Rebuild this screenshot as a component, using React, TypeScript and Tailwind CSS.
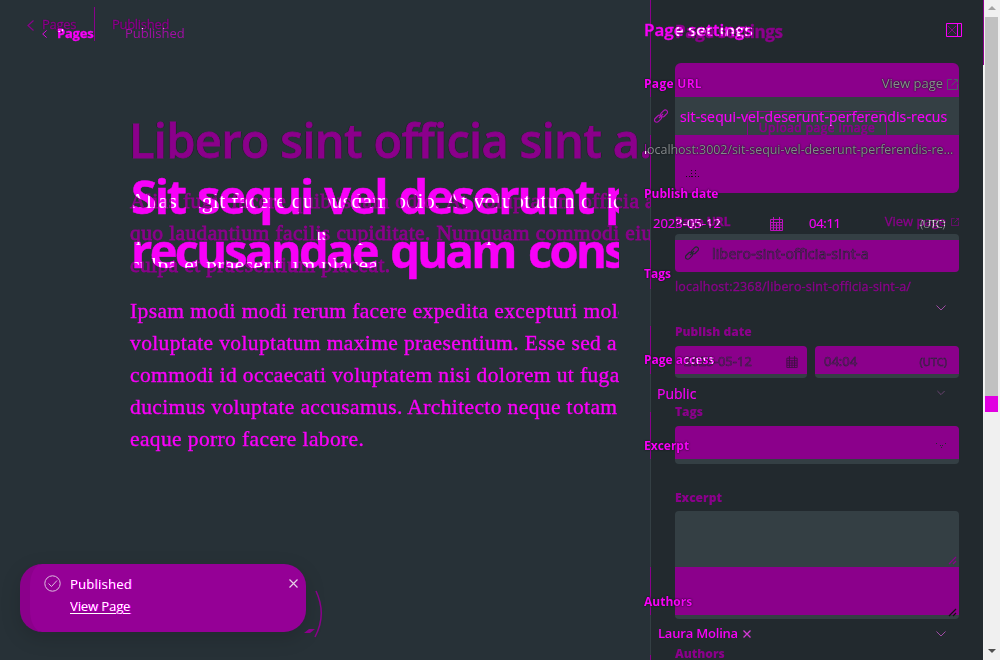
import type { ReactNode } from "react";

const sans = "font-['Open_Sans','Noto_Sans',sans-serif]";
const serif = "font-['Liberation_Serif','Times_New_Roman',serif]";

function Chevron({ className = "" }: { className?: string }) {
  return (
    <svg className={className} width="10" height="6" viewBox="0 0 10 6" fill="none" stroke="currentColor">
      <path d="M.5.5 5 5 9.5.5" />
    </svg>
  );
}

function Back({ className = "" }: { className?: string }) {
  return (
    <svg className={className} viewBox="0 0 7 11" fill="none" stroke="currentColor" strokeWidth="1.200">
      <path d="M6.5.5 1 5.5l5.5 5" />
    </svg>
  );
}

function External({ className = "" }: { className?: string }) {
  return (
    <svg className={className} viewBox="0 0 11 11" fill="none" stroke="currentColor">
      <path d="M5 .5H.5v10h10V5M4.5 6.500l6-6M7 .5h3.500v3" />
    </svg>
  );
}

function Link({ className = "" }: { className?: string }) {
  return (
    <svg className={className} width="14" height="14" viewBox="0 0 14 14" fill="none" stroke="currentColor" strokeWidth="1.200">
      <rect x="6" y="2.200" width="8" height="4.400" rx="2.200" transform="rotate(-45 10 4.400)" />
      <rect x="0" y="7.600" width="8" height="4.400" rx="2.200" transform="rotate(-45 4 9.800)" />
      <path d="m5 9 4-4" />
    </svg>
  );
}

function Calendar({ className = "" }: { className?: string }) {
  return (
    <svg className={className} width="13" height="14" viewBox="0 0 13 14" fill="none" stroke="currentColor">
      <path d="M.5 2.500h12v11H.5zM.5 5.500h12M.5 8.200h12M.5 10.800h12M3.500 0v13.500M6.500 5v8.500M9.500 0v13.500" />
    </svg>
  );
}

function Resizer({ className = "" }: { className?: string }) {
  return (
    <svg className={className} width="9" height="9" viewBox="0 0 9 9" fill="none" stroke="currentColor" strokeWidth="1.200">
      <path d="M1 8 8 1M5 8l3-3" />
    </svg>
  );
}

function Draft() {
  return (
    <div className="flex h-[660px] w-[983px] overflow-hidden text-[#8b008b]">
      <section className="flex w-[650px] shrink-0 flex-col overflow-hidden">
        <header className="flex h-[50px] items-center pl-[27px] text-[13px]">
          <Back className="h-[11px] w-[7px]" />
          <span className="ml-2 w-[52px] tracking-[-0.3px] [-webkit-text-stroke:0.3px_#8b008b] [text-shadow:0_0_1px_#111]">Pages</span>
          <span className="h-[34px] w-px -translate-y-px bg-[#8b008b]" />
          <span className="ml-[17px] tracking-[-0.3px] [-webkit-text-stroke:0.3px_#8b008b] [text-shadow:0_0_1px_#111]">Published</span>
        </header>
        <h1 className="mt-[63px] ml-[129px] h-[55px] text-[47px] leading-[54px] font-semibold tracking-[-0.7px] whitespace-nowrap [-webkit-text-stroke:0.8px_#8b008b] [text-shadow:-1px_0_0_#1d2226,1px_0_0_#1d2226]">
          Libero sint officia sint a.
        </h1>
        <div className={`mt-[17px] ml-[130px] text-[21.500px] leading-8 tracking-[0.380px] whitespace-nowrap [-webkit-text-stroke:0.8px_#8b008b] ${serif}`}>
          <p>Alias fugit facere quibusdam odio. At voluptatum officia at</p>
          <p>quo laudantium facilis cupiditate. Numquam commodi eius</p>
          <p>culpa et praesentium placeat.</p>
        </div>
      </section>
      <aside className="flex w-[309px] shrink-0 flex-col pl-[25px] [&>*]:shrink-0">
        <h2 className="flex h-[64px] items-center text-[17px] font-bold tracking-[-0.4px] [-webkit-text-stroke:0.4px_#8b008b]">Page settings</h2>
        <div className="-mt-px flex h-[130px] flex-col items-center overflow-hidden rounded-md bg-[linear-gradient(#8b008b_34px,#343f44_34px,#343f44_72px,#8b008b_72px)]">
          <span className="mt-[48px] flex h-[34px] w-[140px] shrink-0 items-center justify-center rounded border border-[#8b008b] pb-px text-[12px] tracking-[0.5px] [-webkit-text-stroke:0.7px_#8b008b]">
            Upload page image
          </span>
          <svg className="mt-[2px] mr-[248px] h-[34px] w-[14px] shrink-0 text-[#111]" viewBox="0 0 14 34" fill="none" stroke="currentColor" strokeDasharray="1 2">
            <path d="M5.500 23v9M9.500 23v9M0 29.500h14" />
          </svg>
        </div>
        <div className="mt-[18px] flex h-[22px] items-center text-[12px]">
          <span className="font-bold [-webkit-text-stroke:0.4px_#8b008b]">Page URL</span>
          <span className="ml-auto text-[13px] [-webkit-text-stroke:0.3px_#8b008b]">View page</span>
          <External className="ml-[5px] h-[8px] w-[8px]" />
        </div>
        <div className="mt-px flex h-[38px] items-center rounded bg-[linear-gradient(#343f44_6px,#8b008b_6px)] pl-[10px] text-[14px]">
          <Link className="text-[#222930]" />
          <span className="ml-[13px] tracking-[0.25px] [-webkit-text-stroke:0.6px_#222930]">libero-sint-officia-sint-a</span>
        </div>
        <div className="flex h-[30px] items-center pt-px text-[12.500px] tracking-[0.200px] [-webkit-text-stroke:0.3px_#8b008b]">localhost:2368/libero-sint-officia-sint-a/</div>
        <div className="mt-[20px] flex h-5 items-center text-[12px] font-extrabold">Publish date</div>
        <div className="mt-[4px] flex h-8 gap-2 text-[13px]">
          <div className="flex w-[132px] items-center justify-between rounded bg-[linear-gradient(#8b008b_28px,#343f44_28px)] px-[9px] [-webkit-text-stroke:0.5px_#222930]">
            <span>2023-05-12</span>
            <Calendar className="h-3 w-3 text-[#3a103f]" />
          </div>
          <div className="flex w-[144px] items-center justify-between rounded bg-[linear-gradient(#8b008b_28px,#343f44_28px)] pr-[12px] pl-[9px] [-webkit-text-stroke:0.5px_#222930]">
            <span>04:04</span>
            <span className="text-[11px]">(UTC)</span>
          </div>
        </div>
        <div className="mt-[24px] flex h-5 items-center text-[12px] font-extrabold">Tags</div>
        <div className="mt-[4px] flex h-[38px] items-center justify-end rounded bg-[linear-gradient(#8b008b_33px,#343f44_33px)] pr-[13px]">
          <svg width="10" height="5" viewBox="0 0 10 5" className="text-[#222930]" fill="currentColor">
            <path d="M0 0h1v1H0zM9 0h1v1H9zM4 2h1v1H4zM6 2h1v1H6zM5 4h1v1H5z" />
          </svg>
        </div>
        <div className="mt-[24px] flex h-5 items-center text-[12px] font-extrabold">Excerpt</div>
        <div className="mt-[3px] flex h-[108px] flex-col items-end justify-between rounded bg-[linear-gradient(#343f44_56px,#8b008b_56px,#8b008b_104px,#343f44_104px)] pt-[45px] pr-0.5 pb-0.5">
          <Resizer className="text-[#8b008b]" />
          <Resizer className="text-[#111]" />
        </div>
        <div className="mt-[25px] flex h-5 items-center text-[12px] font-extrabold">Authors</div>
      </aside>
    </div>
  );
}

function Label({ children, className }: { children: ReactNode; className: string }) {
  return (
    <div className={`flex h-5 shrink-0 items-center text-[12px] font-bold [text-shadow:0_0_2px_#16191c,0_0_1px_#16191c] ${className}`}>
      {children}
    </div>
  );
}

function Live() {
  return (
    <div className="flex h-[660px] w-[983px] overflow-hidden text-[#f800f8]">
      <section className="flex w-[619px] shrink-0 flex-col overflow-hidden">
        <header className="flex h-[66px] items-center pt-px pl-[42px] text-[13px]">
          <Back className="h-[8px] w-[5px]" />
          <span className="ml-[10px] w-[68px] font-bold tracking-[-0.200px] [-webkit-text-stroke:0.3px_#f800f8]">Pages</span>
          <span className="text-[#a30ea5]">Published</span>
        </header>
        <h1 className="mt-[103px] ml-[131px] text-[47px] leading-[54px] font-bold whitespace-nowrap [-webkit-text-stroke:0.5px_#f800f8]">
          <span className="block tracking-[-2.200px] [word-spacing:2px]">Sit sequi vel deserunt perferendis</span>
          <span className="block tracking-[-2.700px] [word-spacing:4px]">recusandae quam consequatur</span>
        </h1>
        <div className={`mt-[18px] ml-[130px] text-[21.500px] leading-8 tracking-[0.380px] whitespace-nowrap [-webkit-text-stroke:0.4px_#f800f8] ${serif}`}>
          <p>Ipsam modi modi rerum facere expedita excepturi molestiae</p>
          <p>voluptate voluptatum maxime praesentium. Esse sed a</p>
          <p>commodi id occaecati voluptatem nisi dolorem ut fuga</p>
          <p>ducimus voluptate accusamus. Architecto neque totam</p>
          <p>eaque porro facere labore.</p>
        </div>
      </section>
      <aside className="ml-[25px] flex w-[318px] shrink-0 flex-col">
        <div className="flex h-[60px] shrink-0 items-center justify-between">
          <h2 className="text-[17px] font-semibold [-webkit-text-stroke:0.4px_#f800f8]">Page settings</h2>
          <svg width="16" height="15" viewBox="0 0 16 15" fill="none" stroke="currentColor">
            <path d="M.5.5h15v13H.5zM11.500.5v13" />
            <path d="m2 3 8 8M10 3l-8 8" stroke="#8b008b" />
          </svg>
        </div>
        <Label className="mt-[14px] pr-1">
          <span className="tracking-[0.300px]">Page URL</span>
          <span className="ml-auto text-[13px] font-normal text-[#8b8f91]">View page</span>
          <External className="ml-[4px] h-[11px] w-[11px] text-[#4c5b62]" />
        </Label>
        <div className="mt-[3px] flex h-[38px] shrink-0 items-center pl-[10px] text-[14px] [-webkit-text-stroke:0.2px_#f800f8]">
          <Link className="text-[#b012b4]" />
          <span className="ml-3 tracking-[0.150px] whitespace-nowrap">sit-sequi-vel-deserunt-perferendis-recus</span>
        </div>
        <div className="flex h-[30px] shrink-0 items-center text-[12.500px] tracking-[-0.060px] whitespace-nowrap text-[#858a8d] [text-shadow:0_0_2px_#16191c,0_0_1px_#16191c]">
          <span className="text-[#a30ea5]">l</span>ocalhost:3002/sit-sequi-vel-deserunt-perferendis-re...
        </div>
        <Label className="mt-[19px]">Publish date</Label>
        <div className="mt-[3px] flex h-[34px] shrink-0 items-center pl-[9px] text-[13px] [-webkit-text-stroke:0.2px_#f800f8]">
          <span className="w-[117px]">2023-05-12</span>
          <Calendar className="text-[#bd10bd]" />
          <span className="ml-[26px] w-[111px] tracking-[-0.300px]">04:11</span>
          <span className="text-[11px] tracking-[-0.500px] text-[#858a8d] [-webkit-text-stroke:0px]">(UTC)</span>
        </div>
        <Label className="mt-[23px]">Tags</Label>
        <div className="mt-[5px] flex h-[37px] shrink-0 items-center justify-end pr-4">
          <Chevron className="text-[#a04aa5]" />
        </div>
        <Label className="mt-[24px]">Page access</Label>
        <div className="mt-[4px] flex h-[38px] shrink-0 items-center justify-between pr-[17px] pl-[13px] text-[14px] [-webkit-text-stroke:0.2px_#f800f8]">
          <span>Public</span>
          <Chevron className="w-2 text-[#7c4a82]" />
        </div>
        <Label className="mt-[24px]">Excerpt</Label>
        <div className="mt-[3px] h-[108px] shrink-0" />
        <Label className="mt-[25px]">Authors</Label>
        <div className="mt-[3px] flex h-[38px] shrink-0 items-center pr-4 pl-[14px] text-[13px] font-semibold">
          <span className="tracking-[-0.200px]">Laura Molina</span>
          <svg className="ml-[5px] text-[#d43ad6]" width="8" height="8" viewBox="0 0 8 8" fill="none" stroke="currentColor" strokeWidth="1.300">
            <path d="m.5.5 7 7M7.500.5l-7 7" />
          </svg>
          <Chevron className="ml-auto text-[#a04aa5]" />
        </div>
      </aside>
    </div>
  );
}

function Toast() {
  return (
    <div className="flex h-[68px] w-[286px] items-start rounded-[22px] border-l-[10px] border-[#8b008b] bg-[#950096] pt-[11px] pr-[8px] pl-[14px] text-white shadow-[0_6px_20px_rgba(0,0,0,0.150)]">
      <svg className="shrink-0 text-[#ddbfdf]" width="17" height="17" viewBox="0 0 17 17" fill="none" stroke="currentColor">
        <circle cx="8.500" cy="8.500" r="7.700" />
        <path d="m4.500 8.500 3 3 5.500-6" />
      </svg>
      <div className="ml-[9px] flex flex-col text-[13px] leading-[18px]">
        <span className="tracking-[0.250px] [text-shadow:1px_0_0_#ff00ff]">Published</span>
        <span className="mt-[4px] tracking-[-0.100px] underline decoration-1 underline-offset-2 [text-shadow:1px_0_0_#ff00ff]">View Page</span>
      </div>
      <svg className="mt-[4px] ml-auto text-[#e6cfe6]" width="9" height="9" viewBox="0 0 9 9" fill="none" stroke="currentColor" strokeWidth="1.200">
        <path d="m.5.5 8 8M8.500.5l-8 8" />
      </svg>
    </div>
  );
}

function Scrollbar() {
  return (
    <div className="flex h-[660px] w-[17px] flex-col items-center border-l border-[#f4f4f4] bg-[#f0f0f0] pr-px">
      <svg className="mt-[6px] mb-[7px] shrink-0" width="8" height="4" viewBox="0 0 8 4" fill="#a3a3a3">
        <path d="M0 4 4 0l4 4z" />
      </svg>
      <div className="h-[379px] w-[13px] bg-[#c1c1c1]" />
      <div className="h-[16px] w-[13px] bg-[#e100e1]" />
      <svg className="mt-auto mb-[7px] shrink-0" width="8" height="4" viewBox="0 0 8 4" fill="#505050">
        <path d="m0 0 4 4 4-4z" />
      </svg>
    </div>
  );
}

const cell = "[grid-area:1/1]";
const mask =
  "bg-black [&_*]:!border-transparent [&_*]:!bg-transparent [&_*]:!bg-none [&_*]:!text-white [&_*]:![text-shadow:none] [&_*]:![-webkit-text-stroke:0px] [&_svg]:invisible";

export default function App() {
  return (
    <div className={`grid h-[660px] w-[1000px] overflow-hidden bg-[#273137] ${sans}`}>
      <div className={`flex ${cell}`}>
        <div className="w-[650px]" />
        <div className="w-px bg-[linear-gradient(#8b008b_97px,#343f44_97px,#343f44_135px,#8b008b_135px,#8b008b_207px,#343f44_207px,#343f44_240px,#8b008b_240px,#8b008b_289px,#343f44_289px,#343f44_326px,#8b008b_326px,#8b008b_374px,#343f44_374px,#343f44_412px,#8b008b_412px,#8b008b_459px,#343f44_459px,#343f44_567px,#8b008b_567px,#8b008b_615px,#343f44_615px,#343f44_655px,#8b008b_655px)]" />
        <div className="w-[332px] bg-[#22292e]" />
        <Scrollbar />
      </div>
      <div className={cell}>
        <Draft />
      </div>
      <div className={cell}>
        <Live />
      </div>
      <div aria-hidden="true" className={`isolate grid w-[983px] bg-black mix-blend-screen ${cell}`}>
        <div className={`${cell} ${mask}`}>
          <Draft />
        </div>
        <div className={`mix-blend-multiply ${cell} ${mask}`}>
          <Live />
        </div>
      </div>
      <div className={`flex items-end pb-[28px] pl-[20px] ${cell}`}>
        <Toast />
        <svg className="-ml-[2px] -mb-[8px] shrink-0" width="20" height="52" viewBox="0 0 20 52" fill="none">
          <path d="M12 3c7 15 7 31-1 46" stroke="#8b008b" strokeWidth="1.500" />
          <path d="m0 45 5-4h6l-5 4z" fill="#8b008b" />
        </svg>
      </div>
      <div className={`flex pl-[983px] ${cell}`}>
        <div className="h-[65px] w-px bg-[#8b008b]" />
      </div>
    </div>
  );
}
